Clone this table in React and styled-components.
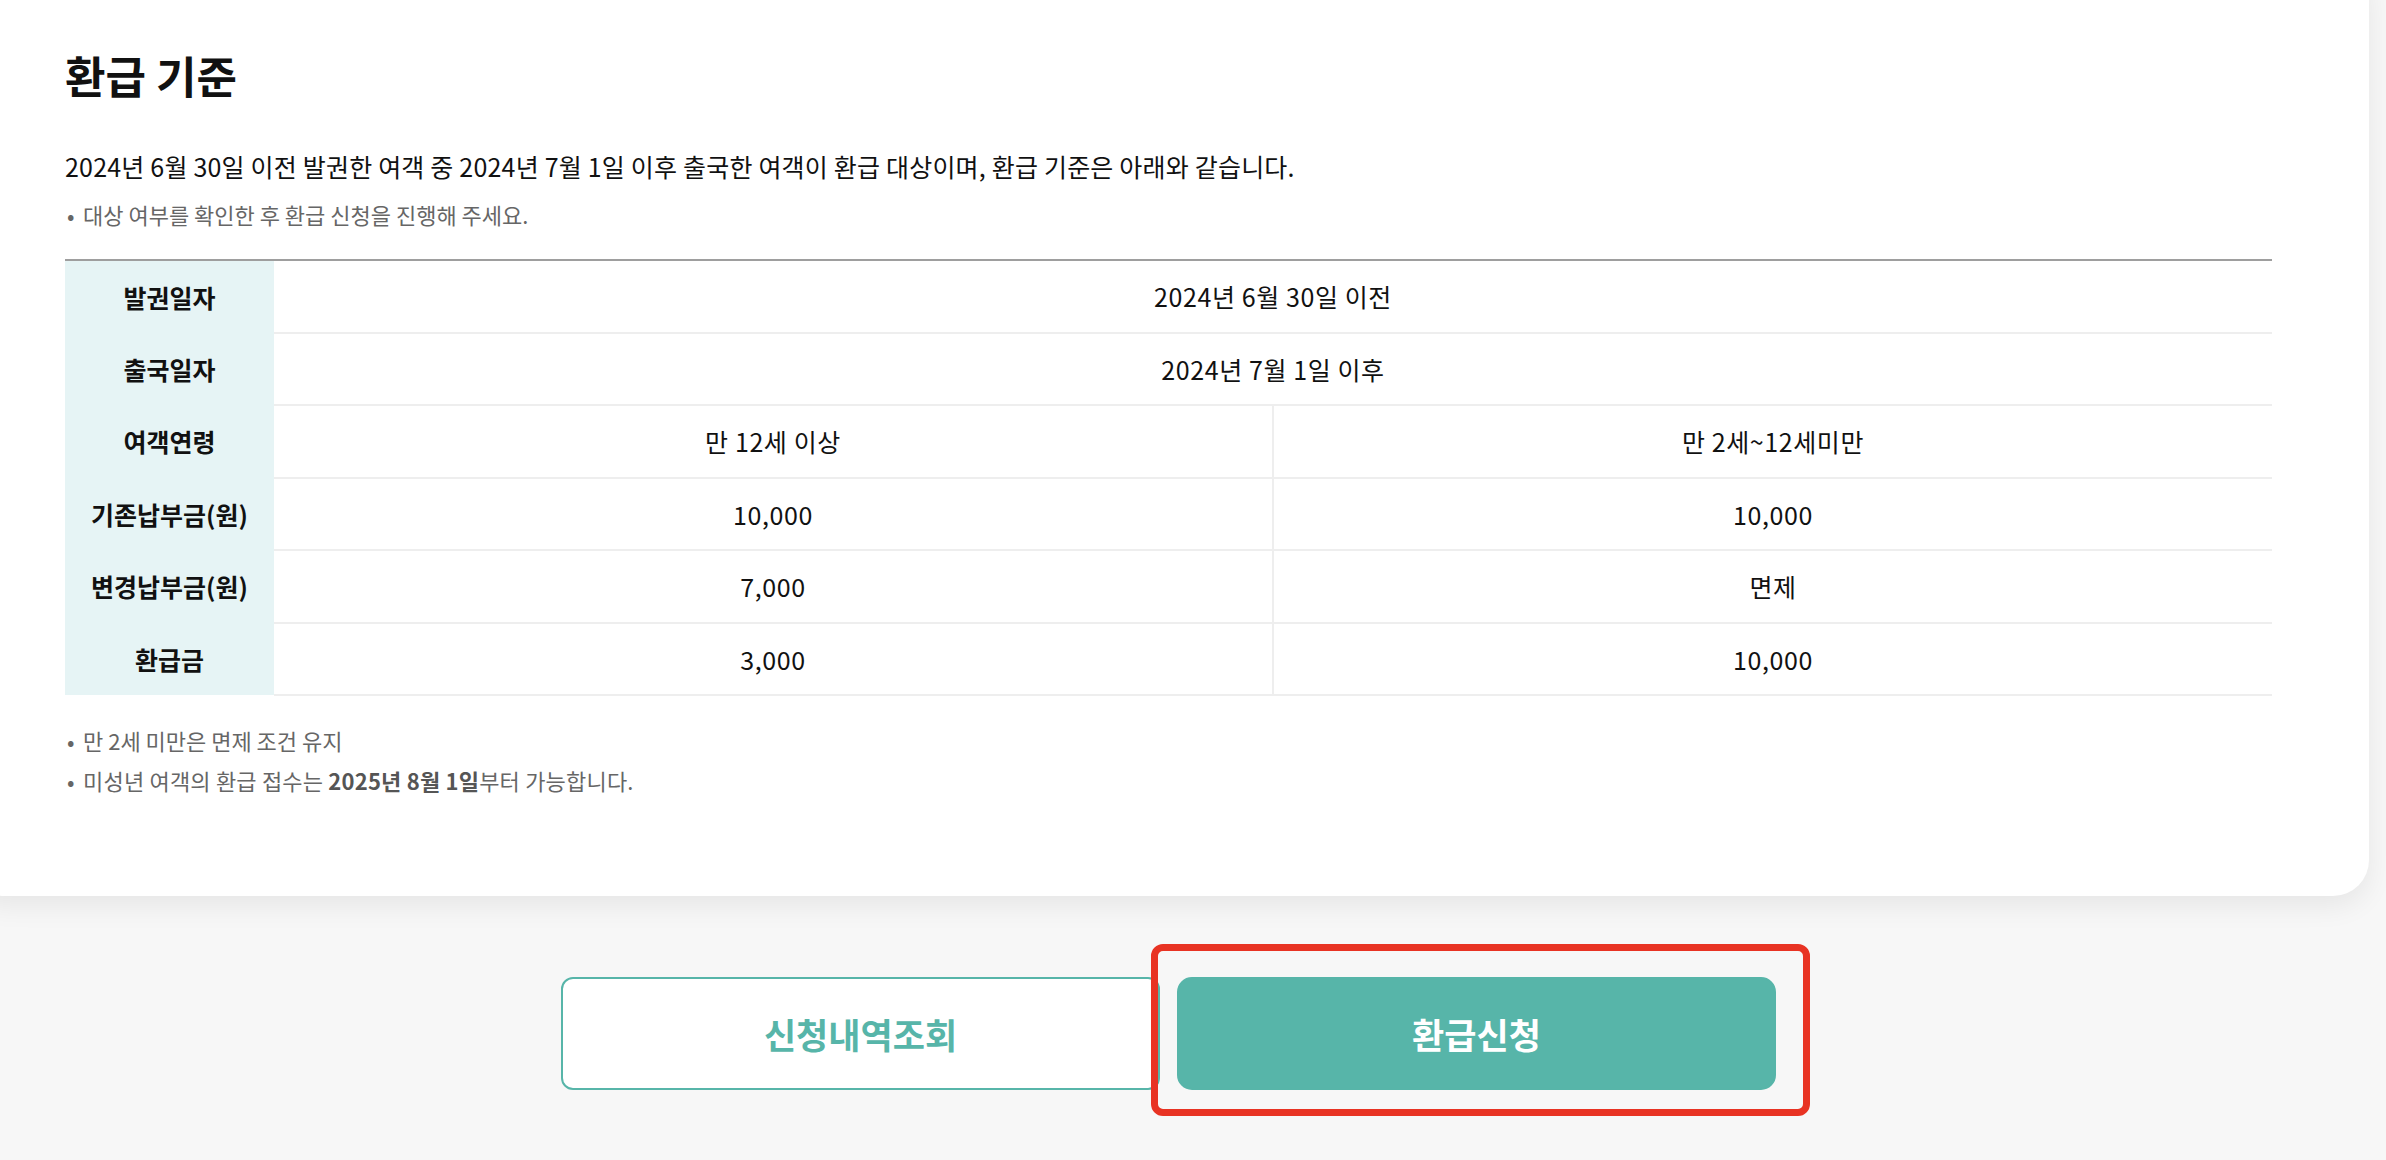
import React from 'react'
import styled, { createGlobalStyle } from 'styled-components';

const GlobalStyle = createGlobalStyle`
  html, body {
    margin: 0;
    padding: 0;
    background: #f7f7f7;
    font-family: "Noto Sans CJK KR", "Noto Sans", sans-serif;
    color: #111;
  }
`;

const Page = styled.div`
  height: 1160px;
  overflow: hidden;
  background: #f7f7f7;
`;

const Card = styled.section`
  margin: -40px 17px 0 -32px;
  padding: 88px 97px 96px;
  background: #fff;
  border-radius: 36px;
  box-shadow: 0 10px 28px rgba(0, 0, 0, 0.07);
`;

const Title = styled.h2`
  margin: 0;
  font-size: 44px;
  line-height: 54px;
  font-weight: 700;
  letter-spacing: 0;
  color: #111;
`;

const Desc = styled.p`
  margin: 46px 0 0;
  font-size: 25px;
  line-height: 36px;
  letter-spacing: 0.2px;
  color: #111;
`;

const Note = styled.p`
  margin: ${p => p.$top || 0}px 0 0;
  font-size: 22px;
  line-height: ${p => p.$lh || 30}px;
  letter-spacing: ${p => p.$ls || 0}px;
  color: #666;

  &::before {
    content: '•';
    display: inline-block;
    width: 16px;
    margin-left: 2px;
  }

  b {
    font-weight: 700;
    color: #555;
  }
`;

const Table = styled.table`
  width: 100%;
  margin-top: 30px;
  border-collapse: collapse;
  border-top: 2px solid #9e9e9e;
  table-layout: fixed;
`;

const Th = styled.th`
  width: 209px;
  height: 70.5px;
  padding: 0;
  background: #e6f4f5;
  font-size: 25px;
  font-weight: 700;
  letter-spacing: 0;
  color: #111;
  text-align: center;
`;

const Td = styled.td`
  height: 70.5px;
  padding: 0;
  border-bottom: 2px solid #eeeeee;
  border-left: ${p => (p.$divider ? '2px solid #eeeeee' : 'none')};
  font-size: 25px;
  font-weight: 400;
  letter-spacing: 0.6px;
  color: #111;
  text-align: center;
`;

const ButtonRow = styled.div`
  display: flex;
  justify-content: center;
  gap: 17px;
  margin: 81px 17px 0 -32px;
`;

const Button = styled.button`
  width: 599px;
  height: 113px;
  box-sizing: border-box;
  border-radius: ${p => (p.$primary ? '15px' : '12px')};
  border: 2px solid #57b5a9;
  background: ${p => (p.$primary ? '#57b5a9' : '#fff')};
  color: ${p => (p.$primary ? '#fff' : '#57b5a9')};
  font-family: inherit;
  font-size: 35px;
  font-weight: 700;
  letter-spacing: 0;
  cursor: pointer;
`;

const Highlight = styled.div`
  position: relative;

  &::after {
    content: '';
    position: absolute;
    top: -33px;
    left: -26px;
    right: -34px;
    bottom: -26px;
    border: 7px solid #e83323;
    border-radius: 12px;
    pointer-events: none;
  }
`;

const rows = [
  { label: '발권일자', cells: ['2024년 6월 30일 이전'] },
  { label: '출국일자', cells: ['2024년 7월 1일 이후'] },
  { label: '여객연령', cells: ['만 12세 이상', '만 2세~12세미만'] },
  { label: '기존납부금(원)', cells: ['10,000', '10,000'] },
  { label: '변경납부금(원)', cells: ['7,000', '면제'] },
  { label: '환급금', cells: ['3,000', '10,000'] },
];

function App() {
  return (
    <Page>
      <GlobalStyle />
      <Card>
        <Title>환급 기준</Title>
        <Desc>2024년 6월 30일 이전 발권한 여객 중 2024년 7월 1일 이후 출국한 여객이 환급 대상이며, 환급 기준은 아래와 같습니다.</Desc>
        <Note $top={15}>대상 여부를 확인한 후 환급 신청을 진행해 주세요.</Note>

        <Table>
          <tbody>
            {rows.map(row => (
              <tr key={row.label}>
                <Th>{row.label}</Th>
                {row.cells.length === 1 ? (
                  <Td colSpan={2}>{row.cells[0]}</Td>
                ) : (
                  row.cells.map((c, i) => (
                    <Td key={i} $divider={i === 1}>{c}</Td>
                  ))
                )}
              </tr>
            ))}
          </tbody>
        </Table>

        <Note $top={24} $lh={40}>만 2세 미만은 면제 조건 유지</Note>
        <Note $lh={40} $ls={0.2}>미성년 여객의 환급 접수는 <b>2025년 8월 1일</b>부터 가능합니다.</Note>
      </Card>

      <ButtonRow>
        <Button>신청내역조회</Button>
        <Highlight>
          <Button $primary>환급신청</Button>
        </Highlight>
      </ButtonRow>
    </Page>
  );
}

export default App;
